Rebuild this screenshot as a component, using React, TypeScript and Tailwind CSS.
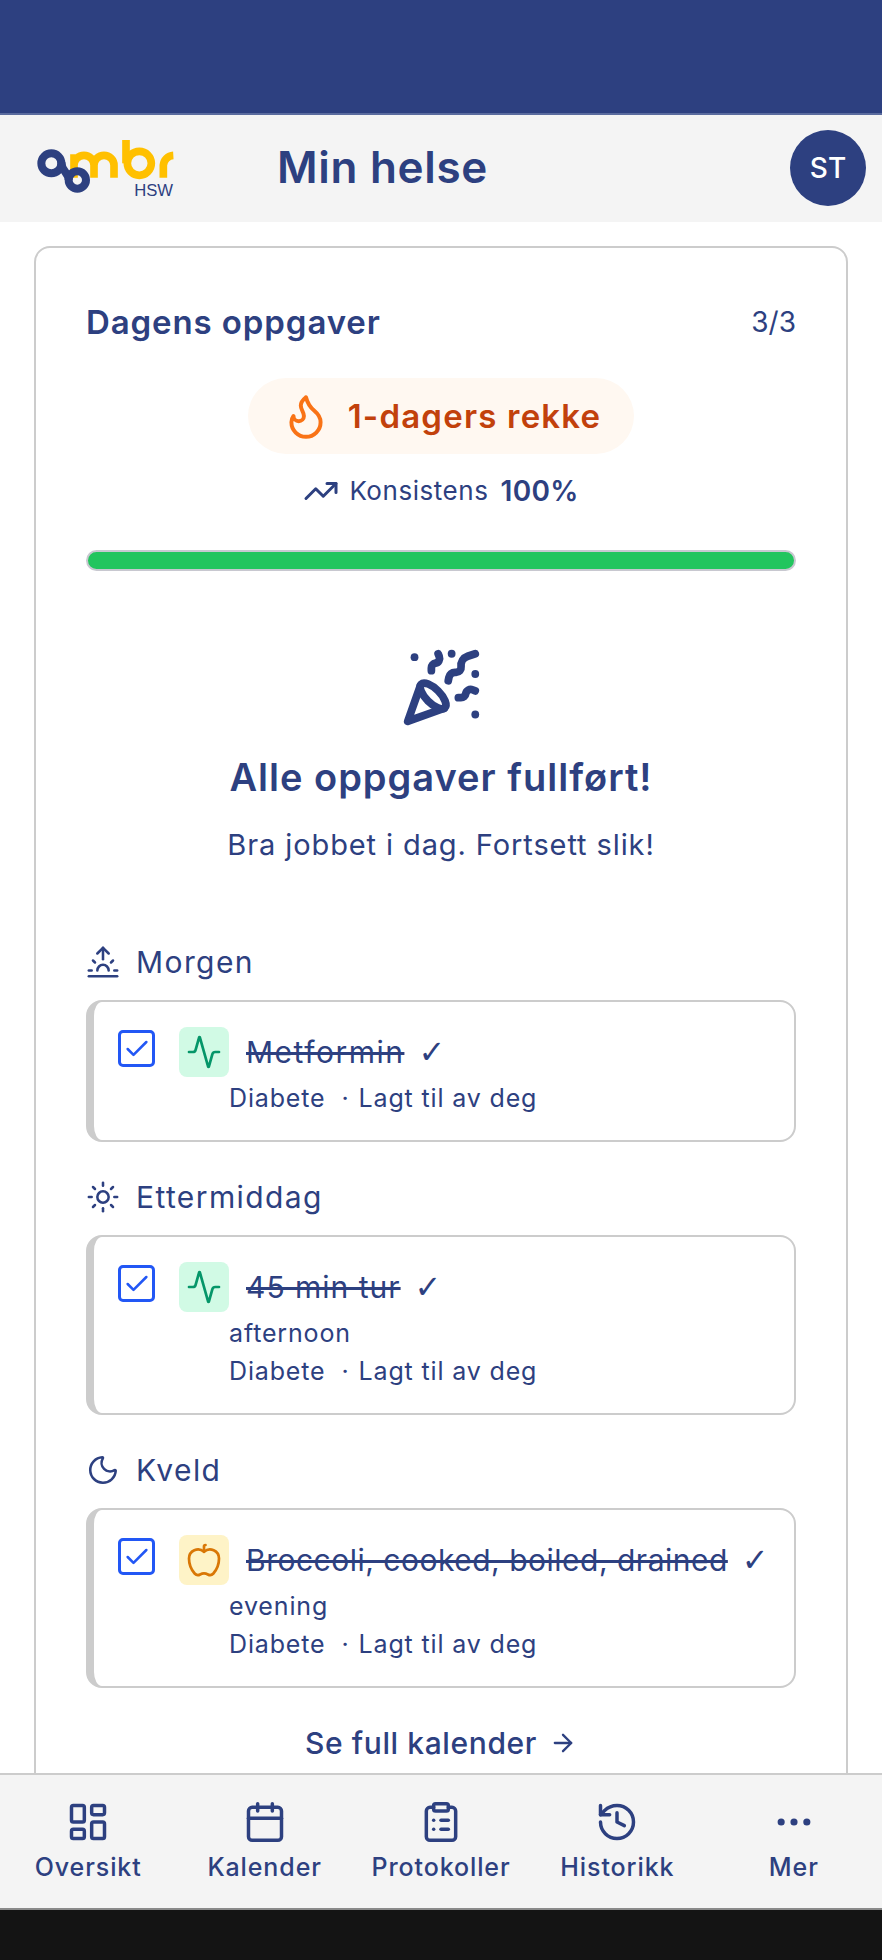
import React from 'react';
import {
  Activity,
  Apple,
  ArrowRight,
  Calendar,
  Check,
  ClipboardList,
  Ellipsis,
  Flame,
  History,
  LayoutDashboard,
  Moon,
  PartyPopper,
  Sun,
  Sunrise,
  TrendingUp,
} from 'lucide-react';

const Logo = () => (
  <svg viewBox="0 0 510 255" className="h-[85px] w-[170px] shrink-0">
    <g fill="none" stroke="#ffc000" strokeWidth="23">
      <path d="M162 155 V85 M162 118 A 30 30 0 0 1 222 118 V155 M222 118 A 30 30 0 0 1 282 118 V155" />
      <path d="M318 42 V112" />
      <circle cx="358" cy="112" r="36" />
      <path d="M430 155 V118 A 32 32 0 0 1 460 88" />
    </g>
    <g fill="none" stroke="#2d4080" strokeWidth="24">
      <circle cx="94" cy="112" r="30" />
      <circle cx="172" cy="162" r="26" />
      <path d="M124 108 C124 135 146 140 146 162" />
    </g>
    <text x="459" y="211" textAnchor="end" fontFamily="Liberation Sans, sans-serif" fontSize="50" fill="#2d4080">
      HSW
    </text>
  </svg>
);

interface Task {
  title: string;
  titleClass: string;
  note?: string;
  food?: boolean;
}

const TaskCard = ({ title, titleClass, note, food }: Task) => (
  <div className="mt-5 flex rounded-2xl border-2 border-l-8 border-[#cccccc] pl-6 pt-[25px] pb-[25px]">
    <div className="mt-[3px] flex h-[37px] w-[37px] shrink-0 items-center justify-center rounded-[5px] border-[3px] border-[#2257f5]">
      <Check className="h-7 w-7 text-[#2257f5]" strokeWidth={2.2} />
    </div>
    <div className="ml-6 min-w-0">
      <div className="flex h-[50px] items-center">
        <div
          className={
            food
              ? 'flex h-[50px] w-[50px] shrink-0 items-center justify-center rounded-lg bg-[#fef3c7]'
              : 'flex h-[50px] w-[50px] shrink-0 items-center justify-center rounded-lg bg-[#d1fae5]'
          }
        >
          {food ? (
            <Apple className="h-9 w-9 text-[#d97706]" strokeWidth={1.8} />
          ) : (
            <Activity className="h-9 w-9 text-[#059669]" strokeWidth={1.8} />
          )}
        </div>
        <span className={`ml-[17px] whitespace-nowrap text-[30px] font-normal leading-9 line-through ${titleClass}`}>
          {title}
        </span>
        <span className="ml-[14px] font-['DejaVu_Sans',sans-serif] text-[32px] leading-9">✓</span>
      </div>
      <div className="ml-[50px]">
        {note && <div className="mt-1 h-[34px] text-[25px] leading-[34px] tracking-[0.85px]">{note}</div>}
        <div className="mt-1 flex h-[34px] whitespace-nowrap text-[25px] leading-[34px] tracking-[0.85px]">
          <span>Diabete</span>
          <span className="ml-4">·</span>
          <span className="ml-[9px]">Lagt til av deg</span>
        </div>
      </div>
    </div>
  </div>
);

const SectionTitle = ({ icon, label, className }: { icon: React.ReactNode; label: string; className: string }) => (
  <div className={`flex h-9 items-center ${className}`}>
    <span className="flex w-[34px] shrink-0 justify-center">{icon}</span>
    <span className="ml-4 text-[30px] leading-9 tracking-[1.4px]">{label}</span>
  </div>
);

const navItems = [
  { label: 'Oversikt', icon: LayoutDashboard },
  { label: 'Kalender', icon: Calendar },
  { label: 'Protokoller', icon: ClipboardList },
  { label: 'Historikk', icon: History },
  { label: 'Mer', icon: Ellipsis },
];

export default function App() {
  return (
    <div className="flex h-[1960px] flex-col overflow-hidden bg-white font-['Inter',sans-serif] text-[#2d4080]">
      <div className="h-[115px] shrink-0 border-b-2 border-[#5a6b9e] bg-[#2d4080]" />

      <header className="flex h-[107px] shrink-0 items-center bg-[#f4f4f4] pl-5 pr-4">
        <Logo />
        <h1 className="ml-[87px] flex-1 pb-1 text-[44px] font-semibold leading-none tracking-[0.7px]">Min helse</h1>
        <div className="mb-0.5 flex h-[76px] w-[76px] items-center justify-center rounded-full bg-[#2d4080] text-[28px] font-medium text-white">
          ST
        </div>
      </header>

      <main className="min-h-0 flex-1 overflow-hidden px-[34px] pt-6">
        <section className="rounded-2xl border-2 border-[#cccccc] px-[50px] pt-14 pb-10">
          <div className="flex h-9 items-center justify-between">
            <h2 className="text-[33px] font-semibold leading-9 tracking-[0.9px]">Dagens oppgaver</h2>
            <span className="text-[28px] leading-9">3/3</span>
          </div>

          <div className="mt-[38px] flex justify-center">
            <div className="flex h-[76px] w-[386px] items-center justify-center rounded-full bg-[#fff8f1]">
              <Flame className="h-[50px] w-[50px] text-[#f97316]" strokeWidth={1.9} />
              <span className="ml-[17px] text-[33px] font-semibold leading-none tracking-[1.2px] text-[#c2410c]">
                1-dagers rekke
              </span>
            </div>
          </div>

          <div className="mt-[19px] flex h-9 items-center justify-center">
            <TrendingUp className="h-9 w-9" strokeWidth={2} />
            <span className="ml-[10px] text-[26px] leading-9 tracking-[0.55px]">Konsistens</span>
            <span className="ml-3 text-[28px] font-semibold leading-9 tracking-[0.3px]">100%</span>
          </div>

          <div className="mt-[41px] h-[21px] overflow-hidden rounded-full border-2 border-[#c8c8d0] bg-[#22c55e]" />

          <div className="mt-[76px] flex justify-center">
            <PartyPopper className="h-[81px] w-[81px]" strokeWidth={2.3} />
          </div>
          <h3 className="mt-[27px] text-center text-[38px] font-semibold leading-[44px] tracking-[1px]">
            Alle oppgaver fullført!
          </h3>
          <p className="mt-7 text-center text-[29px] leading-9 tracking-[0.9px]">Bra jobbet i dag. Fortsett slik!</p>

          <SectionTitle className="mt-[81px]" label="Morgen" icon={<Sunrise className="h-9 w-9" strokeWidth={1.8} />} />
          <TaskCard title="Metformin" titleClass="tracking-[1.5px]" />

          <SectionTitle className="mt-[37px]" label="Ettermiddag" icon={<Sun className="h-9 w-9" strokeWidth={1.8} />} />
          <TaskCard title="45 min tur" titleClass="tracking-[1px]" note="afternoon" />

          <SectionTitle className="mt-[37px]" label="Kveld" icon={<Moon className="h-9 w-9" strokeWidth={1.8} />} />
          <TaskCard title="Broccoli, cooked, boiled, drained" titleClass="tracking-[0.5px]" note="evening" food />

          <div className="mt-[37px] flex h-9 items-center justify-center">
            <span className="text-[30px] font-medium leading-9 tracking-[0.6px]">Se full kalender</span>
            <ArrowRight className="ml-3 h-7 w-7" strokeWidth={2} />
          </div>
        </section>
      </main>

      <nav className="grid h-[135px] shrink-0 grid-cols-5 border-t-2 border-[#cccccc] bg-[#f4f4f4] pt-[25px]">
        {navItems.map(({ label, icon: Icon }) => (
          <div key={label} className="flex flex-col items-center">
            <Icon className="h-11 w-11" strokeWidth={1.9} />
            <span className="mt-[7px] text-[25px] font-medium leading-8 tracking-[0.9px]">{label}</span>
          </div>
        ))}
      </nav>

      <div className="h-[52px] shrink-0 border-t-2 border-[#8a8a8a] bg-[#141414]" />
    </div>
  );
}
